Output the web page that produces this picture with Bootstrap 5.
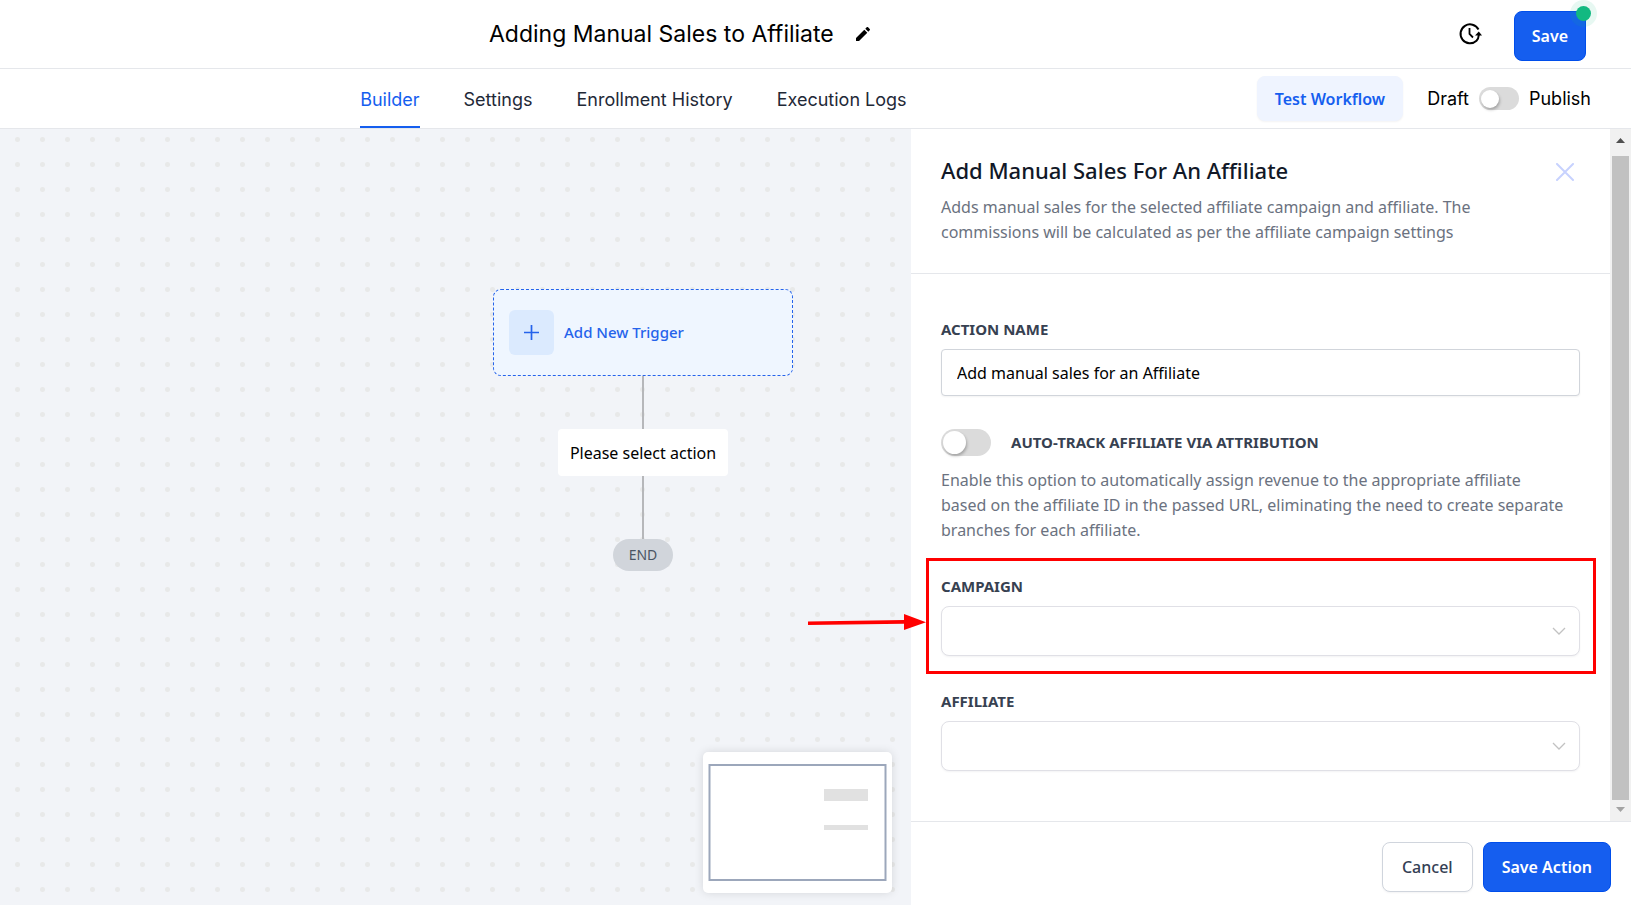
<!DOCTYPE html>
<html lang="en">
<head>
<meta charset="utf-8">
<meta name="viewport" content="width=device-width, initial-scale=1">
<title>Adding Manual Sales to Affiliate</title>
<link href="https://cdn.jsdelivr.net/npm/bootstrap@5.3.0/dist/css/bootstrap.min.css" rel="stylesheet">
<style>
  body { font-family: "Noto Sans", "Open Sans", sans-serif; font-size: 16px; line-height: 25px; color: #000; }
  .ui-inter { font-family: Inter, sans-serif; }

  /* Top bars */
  .top-bar { height: 69px; border-bottom: 1px solid #e5e7eb; padding-right: 45px; }
  .flow-title { font-size: 23px; line-height: 28px; font-weight: 400; }
  .title-area { padding-right: 99px; gap: 22px; }
  .tab-bar { height: 60px; border-bottom: 1px solid #e5e7eb; padding-right: 40px; }
  .tab-list { gap: 44px; padding-left: 10px; }
  .tab-list .nav-link { padding: 0; font-size: 18px; font-weight: 400; line-height: 61px; color: #1f2937; height: 59px; }
  .tab-list .nav-link.active { color: #155eef; box-shadow: inset 0 -2px #155eef; }
  .publish { gap: 10px; font-size: 18px; }

  /* Buttons */
  .btn { font-family: "Noto Sans", "Open Sans", sans-serif; font-size: 16px; line-height: 24px; font-weight: 600; border-radius: 8px; padding: 12px 17px; }
  .btn-main { background: #155eef; border-color: #004eeb; color: #fff; }
  .btn-plain { background: #fff; border-color: #d0d5dd; color: #344054; box-shadow: 0 1px 2px rgba(16,24,40,.05); }
  .panel-foot .btn { padding: 12px 18px; }
  .panel-foot .btn-plain { padding: 12px 19px; font-weight: 500; }
  .btn-test { background: #eff4ff; border-color: #eff4ff; color: #155eef; padding: 10px 17px 9px; box-shadow: 0 1px 2px rgba(16,24,40,.05); }
  .btn-icon { padding: 0; border: 0; line-height: 0; }
  .live-dot { position: absolute; width: 15px; height: 15px; top: -5px; right: -5px; border-radius: 50%; background: #12b981; box-shadow: 0 0 0 6px rgba(18,185,129,.1); }

  /* Switches */
  .toggle.form-check-input { margin: 0; border: 0; flex: none; background: #dbdbdb; display: inline-flex; align-items: center; }
  .toggle::before { content: ""; border-radius: 50%; background: #fff; box-shadow: 1px 2px 3px rgba(0,0,0,.25); margin-left: 2px; }
  .toggle-sm.form-check-input { width: 40px; height: 23px; border-radius: 12px; }
  .toggle-sm::before { width: 18px; height: 18px; }
  .toggle-lg.form-check-input { width: 50px; height: 27px; border-radius: 14px; }
  .toggle-lg::before { width: 23px; height: 23px; }
  .toggle.form-check-input:checked { background: #155eef; }
  .toggle:checked::before { margin-left: auto; margin-right: 2px; }

  /* Canvas */
  .canvas { background: #f2f4f8 radial-gradient(circle at 50% 50%, #e8e9e9 2px, transparent 3px) 5px -2px / 25px 25px; }
  .flow { position: absolute; top: 160px; left: 493px; width: 300px; }
  .node-trigger { width: 100%; height: 87px; border: 1px dashed #2563eb; border-radius: 8px; background: #eff6ff; color: #2563eb; padding: 0 15px; gap: 10px; font-weight: 500; font-size: 15px; }
  .node-plus { width: 45px; height: 45px; border-radius: 6px; background: #dbeafe; }
  .wire { width: 2px; background: #b6b7ba; }
  .wire-a { height: 53px; }
  .wire-b { height: 63px; }
  .node-action { background: #fff; border-radius: 4px; padding: 12px 12px 10px; font-size: 16px; }
  .node-end { background: #d1d5db; color: #4b5563; border-radius: 16px; width: 60px; font-size: 14px; line-height: 32px; }
  .mini-map { position: absolute; right: 19px; bottom: 12px; width: 189px; height: 141px; padding: 12px 5px; background: #fff; border-radius: 5px; box-shadow: 0 0 10px rgba(0,0,0,.12); }

  /* Side panel */
  .side-panel { width: 720px; z-index: 2; }
  .panel-head { padding: 26px 30px 28px; border-bottom: 1px solid #e5e7eb; }
  .panel-title { font-size: 22px; line-height: 30px; font-weight: 500; margin-bottom: 10px; color: #111827; }
  .panel-text { color: #6b7280; margin: 0; }
  .panel-body { padding: 43px 30px 48px; }
  .field-label { display: block; font-size: 15px; line-height: 25px; font-weight: 700; color: #374151; margin-bottom: 7px; }
  .panel-body .form-control { height: 47px; border: 1px solid #d1d5db; border-radius: 4px; padding: 1px 15px 0; box-shadow: 0 1px 2px rgba(0,0,0,.05); color: #000; font-size: 16px; }
  .panel-body .form-select { height: 50px; border: 1px solid #e0e0e6; border-radius: 8px; box-shadow: 0 1px 2px rgba(16,24,40,.05);
    background-image: url("data:image/svg+xml,%3Csvg xmlns='http://www.w3.org/2000/svg' viewBox='0 0 14 14'%3E%3Cpath d='M1 4l6 6 6-6' fill='none' stroke='%23c2c2c2' stroke-width='1.3'/%3E%3C/svg%3E"); background-size: 14px 14px; background-position: right 13px center; }
  .track-row { gap: 20px; margin-top: 33px; }
  .auto-help { margin-top: 12px; }
  .field-group { margin-top: 33px; }
  .auto-help + .field-group { margin-top: 31px; }
  .callout-box { position: absolute; top: -16px; bottom: -18px; left: -15px; right: -16px; border: 3px solid #f00; pointer-events: none; }
  .callout-arrow { position: absolute; left: -133px; top: 38px; pointer-events: none; }
  .panel-foot { padding: 20px; border-top: 1px solid #e5e7eb; gap: 10px; height: 84px; }

  .scroll-rail { width: 21px; background: #f1f1f1; }
  .scroll-thumb { width: 17px; background: #c1c1c1; }
</style>
</head>
<body class="d-flex flex-column min-vh-100 bg-white">

<header class="top-bar d-flex align-items-center ui-inter">
  <div class="title-area flex-grow-1 d-flex justify-content-center align-items-center">
    <h1 class="flow-title m-0">Adding Manual Sales to Affiliate</h1>
    <button type="button" class="btn btn-icon" aria-label="Edit name">
      <svg width="14" height="14" viewBox="0 0 14 14"><path d="M0 14v-3L8.300 2.700l3 3L3 14zM9.300 1.700L10.700.3a1 1 0 0 1 1.400 0l1.600 1.600a1 1 0 0 1 0 1.400L12.300 4.700z" fill="#000"/></svg>
    </button>
  </div>
  <button type="button" class="btn btn-icon me-4" aria-label="Version history">
    <svg width="24" height="24" viewBox="0 0 24 24" fill="none" stroke="#000" stroke-width="2"><path d="M20.500 7.500A9.500 9.500 0 1 0 18.500 18.800Q20.500 17 20.800 13"/><path d="M11.500 6v6l3.500 3.500" stroke-width="1.800"/><path d="M17 13.500l3.800-4 3.200 4z" fill="#000" stroke="none"/></svg>
  </button>
  <div class="position-relative ms-2 mt-1">
    <button type="button" class="btn btn-main">Save</button>
    <span class="live-dot"></span>
  </div>
</header>

<nav class="tab-bar d-flex align-items-center ui-inter">
  <div class="tab-list nav flex-grow-1 justify-content-center">
    <a class="nav-link active" href="#" aria-current="page">Builder</a>
    <a class="nav-link" href="#">Settings</a>
    <a class="nav-link" href="#">Enrollment History</a>
    <a class="nav-link" href="#">Execution Logs</a>
  </div>
  <button type="button" class="btn btn-test">Test Workflow</button>
  <div class="d-flex align-items-center ms-4 publish">
    <label for="publish">Draft</label>
    <input class="form-check-input toggle toggle-sm" type="checkbox" role="switch" id="publish">
    <label for="publish">Publish</label>
  </div>
</nav>

<div class="d-flex flex-grow-1">
  <main class="canvas flex-grow-1 position-relative overflow-hidden">
    <div class="flow d-flex flex-column align-items-center">
      <button type="button" class="node-trigger d-flex align-items-center">
        <span class="node-plus d-flex align-items-center justify-content-center">
          <svg width="15" height="15" viewBox="0 0 15 15" stroke="#2563eb" stroke-width="1.700"><path d="M7.500 0v15M0 7.500h15"/></svg>
        </span>
        <span>Add New Trigger</span>
      </button>
      <div class="wire wire-a"></div>
      <div class="node-action">Please select action</div>
      <div class="wire wire-b"></div>
      <div class="node-end text-center">END</div>
    </div>
    <div class="mini-map">
      <svg class="d-block w-100 h-100" viewBox="0 0 179 117"><rect x="1.500" y="1" width="176" height="115" fill="#fff" stroke="#9ca7bb" stroke-width="2"/><path d="M116 25h44v12h-44zM116 61h44v5h-44z" fill="#e1e1e1"/></svg>
    </div>
  </main>

  <aside class="side-panel flex-shrink-0 d-flex flex-column bg-white position-relative">
    <div class="d-flex flex-grow-1">
      <div class="flex-grow-1">
        <div class="panel-head d-flex justify-content-between align-items-start">
          <div>
            <h2 class="panel-title">Add Manual Sales For An Affiliate</h2>
            <p class="panel-text">Adds manual sales for the selected affiliate campaign and affiliate. The<br>commissions will be calculated as per the affiliate campaign settings</p>
          </div>
          <button type="button" class="btn btn-icon mt-2" aria-label="Close">
            <svg class="d-block" width="30" height="18" viewBox="0 0 30 18" stroke="#c7d2fe" stroke-width="2" stroke-linecap="round"><path d="M7 1l16 16M23 1L7 17"/></svg>
          </button>
        </div>
        <form class="panel-body">
          <label class="field-label" for="action-name">ACTION NAME</label>
          <input type="text" class="form-control" id="action-name" value="Add manual sales for an Affiliate">
          <div class="track-row d-flex align-items-center">
            <input class="form-check-input toggle toggle-lg" type="checkbox" role="switch" id="auto-track">
            <label class="field-label m-0" for="auto-track">AUTO-TRACK AFFILIATE VIA ATTRIBUTION</label>
          </div>
          <p class="panel-text auto-help">Enable this option to automatically assign revenue to the appropriate affiliate<br>based on the affiliate ID in the passed URL, eliminating the need to create separate<br>branches for each affiliate.</p>
          <div class="field-group position-relative">
            <label class="field-label" for="campaign">CAMPAIGN</label>
            <select class="form-select" id="campaign"><option></option></select>
            <div class="callout-box"></div>
            <svg class="callout-arrow" width="120" height="20" viewBox="0 0 120 20"><path d="M0 9.500v3.500l96-1.200V18l22-7.800L96 2v6z" fill="#f00"/></svg>
          </div>
          <div class="field-group">
            <label class="field-label" for="affiliate">AFFILIATE</label>
            <select class="form-select" id="affiliate"><option></option></select>
          </div>
        </form>
      </div>
      <div class="scroll-rail d-flex flex-column align-items-center flex-shrink-0" aria-hidden="true">
        <svg width="21" height="27" viewBox="0 0 21 27"><path d="M6 14l4.500-5 4.500 5z" fill="#505050"/></svg>
        <div class="scroll-thumb flex-grow-1"></div>
        <svg width="21" height="21" viewBox="0 0 21 21"><path d="M6 7h9l-4.500 5z" fill="#a3a3a3"/></svg>
      </div>
    </div>
    <div class="panel-foot d-flex justify-content-end align-items-start">
      <button type="button" class="btn btn-plain">Cancel</button>
      <button type="button" class="btn btn-main">Save Action</button>
    </div>
  </aside>
</div>

<script src="https://cdn.jsdelivr.net/npm/bootstrap@5.3.0/dist/js/bootstrap.bundle.min.js"></script>
</body>
</html>
